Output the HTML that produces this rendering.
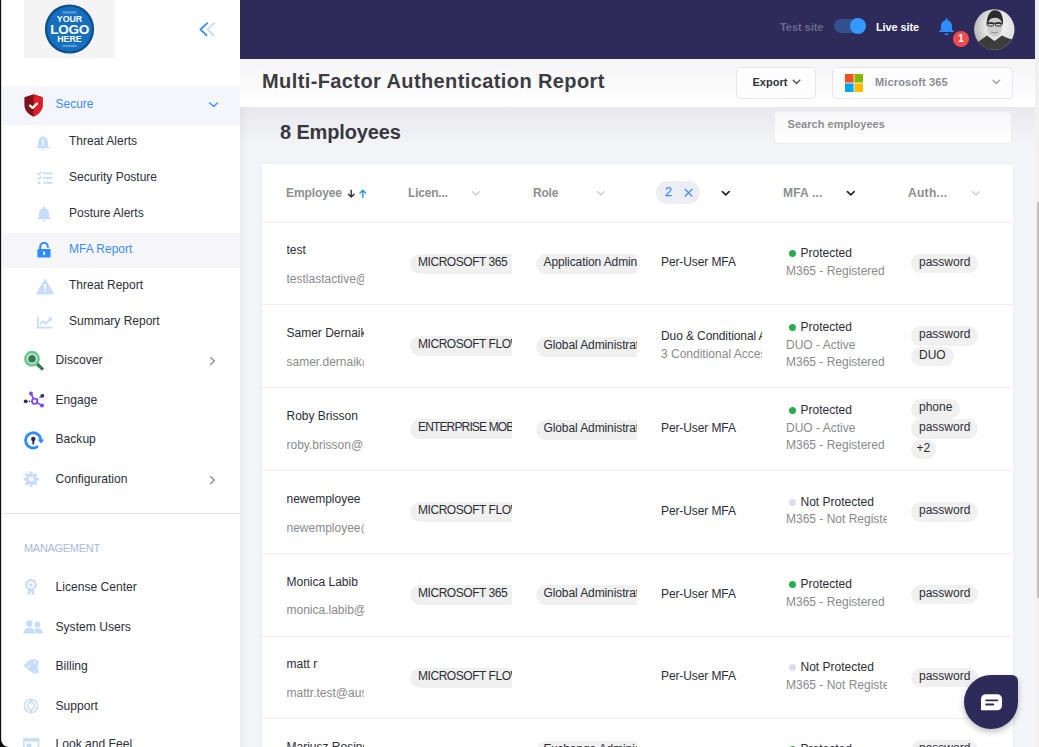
<!DOCTYPE html>
<html><head><meta charset="utf-8"><style>
html,body{margin:0;padding:0;width:1039px;height:747px;overflow:hidden;background:#fff;font-family:"Liberation Sans", sans-serif;}
*{box-sizing:content-box}
</style></head><body>
<div id="sb" style="position:absolute;left:0;top:0;width:240px;height:747px;background:#fff;overflow:hidden">
<div style="position:absolute;left:24px;top:0;width:91px;height:58px;background:#f4f4f4"></div>
<svg style="position:absolute;left:44px;top:4px" width="51" height="51" viewBox="0 0 51 51">
<circle cx="25.5" cy="25" r="24.6" fill="#0c4f8c"/>
<circle cx="25.5" cy="25" r="22.4" fill="#166fbe"/>
<rect x="18.5" y="7.3" width="14" height="2.2" fill="#5d9bd6"/>
<rect x="18.5" y="40.8" width="14" height="2.2" fill="#5d9bd6"/>
<text x="25.5" y="18.3" text-anchor="middle" font-family="Liberation Sans" font-weight="bold" font-size="8.8" fill="#fff">YOUR</text>
<text x="25.6" y="29.6" text-anchor="middle" font-family="Liberation Sans" font-weight="bold" font-size="13.6" fill="#fff" letter-spacing="-0.3">LOGO</text>
<text x="25.5" y="38" text-anchor="middle" font-family="Liberation Sans" font-weight="bold" font-size="8.8" fill="#fff">HERE</text>
</svg>
<svg style="position:absolute;left:196px;top:19px" width="24" height="21" viewBox="0 0 24 21">
<polyline points="11.3,4.2 4.4,10.5 10.7,16.3" fill="none" stroke="#2f8cff" stroke-width="1.7" stroke-linecap="round" stroke-linejoin="round"/>
<polyline points="18,4.2 11.5,10.5 17.6,16.3" fill="none" stroke="#bcdcff" stroke-width="1.7" stroke-linecap="round" stroke-linejoin="round"/>
</svg>
<div style="position:absolute;left:2px;top:86px;width:238px;height:39px;background:#f5f6fb"></div>
<svg style="position:absolute;left:24px;top:94px" width="19" height="23" viewBox="0 0 19 23">
<path d="M9.5 0.3 L18.6 3.3 L18.6 11 C18.6 16.5 14.5 20.5 9.5 22.8 C4.5 20.5 0.4 16.5 0.4 11 L0.4 3.3 Z" fill="#7e1418"/>
<path d="M9.5 0.3 L18.6 3.3 L18.6 11 C18.6 16.5 14.5 20.5 9.5 22.8 Z" fill="#de1f26"/>
<polyline points="6,11.6 8.6,13.9 13,9.6" fill="none" stroke="#fff" stroke-width="2.2" stroke-linecap="round" stroke-linejoin="round"/>
</svg>
<div style="position:absolute;left:55.5px;top:97.34px;font-size:12px;line-height:14px;color:#3b8df5;font-weight:normal;letter-spacing:0px;white-space:nowrap;">Secure</div>
<svg style="position:absolute;left:207.5px;top:101.3px" width="11" height="8" viewBox="0 0 11 8"><polyline points="1.6,2 5.8,5.3 9.4,2" fill="none" stroke="#3b8df5" stroke-width="1.3" stroke-linecap="round"/></svg>
<div style="position:absolute;left:2px;top:233px;width:238px;height:35px;background:#f6f6f9"></div>
<svg style="position:absolute;left:36px;top:135px" width="14" height="16" viewBox="0 0 14 16"><path d="M7 0.4 C7.6 0.4 8 0.8 8 1.4 V2 C10.4 2.6 11.9 4.6 11.9 7.2 V10.4 C11.9 11.3 12.7 12 13.8 12.3 V13 H0.2 V12.3 C1.3 12 2.1 11.3 2.1 10.4 V7.2 C2.1 4.6 3.6 2.6 6 2 V1.4 C6 0.8 6.4 0.4 7 0.4 Z" fill="#c6dcfb"/><rect x="6.2" y="4.5" width="1.6" height="4.2" fill="#fff"/><rect x="6.2" y="9.6" width="1.6" height="1.5" fill="#fff"/><path d="M4.8 13.8h4.4L7 15.6z" fill="#c6dcfb"/></svg>
<div style="position:absolute;left:69px;top:134.44px;font-size:12px;line-height:14px;color:#2c2e3a;font-weight:normal;letter-spacing:0px;white-space:nowrap;">Threat Alerts</div>
<svg style="position:absolute;left:37px;top:171px" width="16" height="14" viewBox="0 0 16 14"><polyline points="0.5,2.3 2,3.6 4.6,0.8" fill="none" stroke="#c6dcfb" stroke-width="1.4"/><polyline points="0.5,6.8 2,8.1 4.6,5.3" fill="none" stroke="#c6dcfb" stroke-width="1.4"/><circle cx="2.2" cy="11.8" r="1.4" fill="#c6dcfb"/><rect x="6" y="1.5" width="9.5" height="1.8" fill="#c6dcfb"/><rect x="6" y="6" width="9.5" height="1.8" fill="#c6dcfb"/><rect x="6" y="10.9" width="9.5" height="1.8" fill="#c6dcfb"/></svg>
<div style="position:absolute;left:69px;top:170.44px;font-size:12px;line-height:14px;color:#2c2e3a;font-weight:normal;letter-spacing:0px;white-space:nowrap;">Security Posture</div>
<svg style="position:absolute;left:37px;top:206px" width="14" height="16" viewBox="0 0 14 16"><path d="M7 0.4 C7.6 0.4 8 0.8 8 1.4 V2 C10.4 2.6 11.9 4.6 11.9 7.2 V10.4 C11.9 11.3 12.7 12 13.8 12.3 V13 H0.2 V12.3 C1.3 12 2.1 11.3 2.1 10.4 V7.2 C2.1 4.6 3.6 2.6 6 2 V1.4 C6 0.8 6.4 0.4 7 0.4 Z" fill="#c6dcfb"/><path d="M4.8 13.8h4.4L7 15.6z" fill="#c6dcfb"/></svg>
<div style="position:absolute;left:69px;top:206.44px;font-size:12px;line-height:14px;color:#2c2e3a;font-weight:normal;letter-spacing:0px;white-space:nowrap;">Posture Alerts</div>
<div style="position:absolute;left:69px;top:242.44px;font-size:12px;line-height:14px;color:#3b8df5;font-weight:normal;letter-spacing:0px;white-space:nowrap;">MFA Report</div>
<svg style="position:absolute;left:36px;top:278px" width="18" height="17" viewBox="0 0 18 17"><path d="M9 1.2 L17.2 15.2 Q17.5 16 16.6 16 H1.4 Q0.5 16 0.8 15.2 Z" fill="#c6dcfb" stroke="#c6dcfb" stroke-width="1" stroke-linejoin="round"/><rect x="8.2" y="6" width="1.6" height="5" fill="#fff"/><rect x="8.2" y="12.2" width="1.6" height="1.6" fill="#fff"/></svg>
<div style="position:absolute;left:69px;top:278.44px;font-size:12px;line-height:14px;color:#2c2e3a;font-weight:normal;letter-spacing:0px;white-space:nowrap;">Threat Report</div>
<svg style="position:absolute;left:37px;top:316px" width="16" height="13" viewBox="0 0 16 13"><polyline points="0.9,0.5 0.9,11.6 15.4,11.6" fill="none" stroke="#c6dcfb" stroke-width="1.7"/><polyline points="3.2,8.3 6.2,5.2 9,7.6 13.6,3" fill="none" stroke="#c6dcfb" stroke-width="1.8"/><path d="M10.6 1.4 H14.8 V5.6 Z" fill="#c6dcfb"/></svg>
<div style="position:absolute;left:69px;top:314.44px;font-size:12px;line-height:14px;color:#2c2e3a;font-weight:normal;letter-spacing:0px;white-space:nowrap;">Summary Report</div>
<svg style="position:absolute;left:37px;top:242px" width="14" height="16" viewBox="0 0 14 16"><path d="M3.2 7V4.6C3.2 2.4 4.9 0.8 7 0.8s3.8 1.6 3.8 3.8" fill="none" stroke="#2f8cff" stroke-width="2"/><rect x="0.4" y="7" width="13.2" height="8.6" rx="1.2" fill="#2f8cff"/><rect x="6.2" y="9.4" width="1.6" height="3.8" rx=".8" fill="#fff"/><rect x="9.8" y="4.2" width="2" height="1.6" fill="#2f8cff"/></svg>
<svg style="position:absolute;left:23px;top:350px" width="22" height="22" viewBox="0 0 22 22"><circle cx="9" cy="8.8" r="6.45" fill="none" stroke="#6ccb95" stroke-width="3"/><circle cx="9" cy="8.8" r="3.85" fill="#347a55"/><line x1="14.2" y1="14" x2="20" y2="19.6" stroke="#347a55" stroke-width="3.2"/></svg>
<div style="position:absolute;left:55.5px;top:352.81px;font-size:12.1px;line-height:14px;color:#2c2e3a;font-weight:normal;letter-spacing:0px;white-space:nowrap;">Discover</div>
<svg style="position:absolute;left:208px;top:355px" width="9" height="12" viewBox="0 0 9 12"><polyline points="2.6,2.7 6.3,6.1 2.6,9.5" fill="none" stroke="#8c8c8c" stroke-width="1.3" stroke-linecap="round"/></svg>
<svg style="position:absolute;left:23px;top:390px" width="22" height="20" viewBox="0 0 22 20"><line x1="2.7" y1="11.3" x2="9.5" y2="11.3" stroke="#2e2b5b" stroke-width="1.2" stroke-dasharray="1.5 1.5"/><line x1="11.6" y1="11.3" x2="8" y2="3.4" stroke="#7d48f6" stroke-width="1.6"/><line x1="11.6" y1="11.3" x2="19" y2="15.6" stroke="#7d48f6" stroke-width="1.6"/><line x1="11.6" y1="11.3" x2="19.3" y2="5.8" stroke="#2e2b5b" stroke-width="1.2" stroke-dasharray="1.5 1.5"/><circle cx="11.6" cy="11.2" r="2.6" fill="#fff" stroke="#7d48f6" stroke-width="1.8"/><circle cx="8" cy="3.4" r="2" fill="#7d48f6"/><circle cx="19" cy="15.6" r="2" fill="#7d48f6"/><circle cx="2.7" cy="11.3" r="1.9" fill="#2e2b5b"/><circle cx="19.3" cy="5.8" r="1.9" fill="#2e2b5b"/></svg>
<div style="position:absolute;left:55.5px;top:392.81px;font-size:12.1px;line-height:14px;color:#2c2e3a;font-weight:normal;letter-spacing:0px;white-space:nowrap;">Engage</div>
<svg style="position:absolute;left:23px;top:430px" width="22" height="21" viewBox="0 0 22 21"><path d="M14.13 16.84 A7.6 7.6 0 1 1 17.67 9.74" fill="none" stroke="#2f8cff" stroke-width="2.8" stroke-linecap="round"/><path d="M14.6 9.4 L21.4 9.4 L18 13.6 Z" fill="#2f8cff"/><circle cx="10.3" cy="8.9" r="2.2" fill="#2a2550"/><path d="M9.2 9.4 H11.4 L11.1 14.6 H9.5 Z" fill="#2a2550"/></svg>
<div style="position:absolute;left:55.5px;top:431.81px;font-size:12.1px;line-height:14px;color:#2c2e3a;font-weight:normal;letter-spacing:0px;white-space:nowrap;">Backup</div>
<svg style="position:absolute;left:23px;top:471px" width="17" height="17" viewBox="0 0 17 17"><g fill="#c6dcfb"><circle cx="8.2" cy="8.2" r="5.6"/><rect x="6.8" y="0.5" width="2.8" height="3.5"/><rect x="6.8" y="12.4" width="2.8" height="3.5"/><rect x="0.5" y="6.8" width="3.5" height="2.8"/><rect x="12.4" y="6.8" width="3.5" height="2.8"/><g transform="rotate(45 8.2 8.2)"><rect x="6.8" y="0.5" width="2.8" height="3.5"/><rect x="6.8" y="12.4" width="2.8" height="3.5"/><rect x="0.5" y="6.8" width="3.5" height="2.8"/><rect x="12.4" y="6.8" width="3.5" height="2.8"/></g></g><circle cx="8.2" cy="8.2" r="2.4" fill="#fff"/></svg>
<div style="position:absolute;left:55.5px;top:471.81px;font-size:12.1px;line-height:14px;color:#2c2e3a;font-weight:normal;letter-spacing:0px;white-space:nowrap;">Configuration</div>
<svg style="position:absolute;left:208px;top:474px" width="9" height="12" viewBox="0 0 9 12"><polyline points="2.6,2.7 6.3,6.1 2.6,9.5" fill="none" stroke="#8c8c8c" stroke-width="1.3" stroke-linecap="round"/></svg>
<div style="position:absolute;left:2px;top:513px;width:238px;height:1px;background:#e4e6ee"></div>
<div style="position:absolute;left:24px;top:542.49px;font-size:11px;line-height:13px;color:#a9b9df;font-weight:normal;letter-spacing:-0.3px;white-space:nowrap;">MANAGEMENT</div>
<svg style="position:absolute;left:24px;top:578px" width="14" height="18" viewBox="0 0 14 18"><g fill="#c6dcfb"><path d="M4.6 10.5 L3.2 16.8 L4.9 16 L5.9 17.3 L7.2 11.6 Z M9.4 10.5 L10.8 16.8 L9.1 16 L8.1 17.3 L6.8 11.6 Z"/><circle cx="7" cy="6.8" r="5.1"/><circle cx="12.20" cy="6.80" r="1.05"/><circle cx="11.50" cy="9.40" r="1.05"/><circle cx="9.60" cy="11.30" r="1.05"/><circle cx="7.00" cy="12.00" r="1.05"/><circle cx="4.40" cy="11.30" r="1.05"/><circle cx="2.50" cy="9.40" r="1.05"/><circle cx="1.80" cy="6.80" r="1.05"/><circle cx="2.50" cy="4.20" r="1.05"/><circle cx="4.40" cy="2.30" r="1.05"/><circle cx="7.00" cy="1.60" r="1.05"/><circle cx="9.60" cy="2.30" r="1.05"/><circle cx="11.50" cy="4.20" r="1.05"/></g><circle cx="7" cy="6.8" r="3.9" fill="#fff"/><circle cx="7" cy="6.8" r="3.9" fill="none" stroke="#c6dcfb" stroke-width="0.6"/><polygon points="7.00,4.30 7.68,6.07 9.57,6.17 8.09,7.36 8.59,9.18 7.00,8.15 5.41,9.18 5.91,7.36 4.43,6.17 6.32,6.07" fill="#c6dcfb"/></svg>
<div style="position:absolute;left:55.5px;top:579.81px;font-size:12.1px;line-height:14px;color:#2c2e3a;font-weight:normal;letter-spacing:0px;white-space:nowrap;">License Center</div>
<svg style="position:absolute;left:23px;top:620px" width="21" height="15" viewBox="0 0 21 15"><circle cx="6.2" cy="3.6" r="3.3" fill="#c6dcfb"/><path d="M0.5 13.6 C0.5 9.8 2.6 7.8 6.2 7.8 C9.8 7.8 12 9.8 12 13.6 Z" fill="#c6dcfb"/><circle cx="14.4" cy="4.4" r="2.9" fill="#c6dcfb"/><path d="M12.6 13.6 C12.6 11 12.2 9.6 11.5 8.8 C12.3 8.4 13.2 8.2 14.4 8.2 C17.8 8.2 19.7 10 19.7 13.6 Z" fill="#c6dcfb"/></svg>
<div style="position:absolute;left:55.5px;top:619.81px;font-size:12.1px;line-height:14px;color:#2c2e3a;font-weight:normal;letter-spacing:0px;white-space:nowrap;">System Users</div>
<svg style="position:absolute;left:23px;top:659px" width="17" height="15" viewBox="0 0 17 15"><path d="M0.4 6.8 L6.6 0.6 H13.5 L15.6 2.7 L14.6 9.4 L9.8 14.2 Z" fill="#c6dcfb"/><circle cx="11.6" cy="3.5" r="1" fill="#fff"/><rect x="4" y="7" width="3.6" height="1" transform="rotate(-40 5.8 7.5)" fill="#fff"/><path d="M9.8 14.2 L15.6 8.4 L15.6 14.2 Z" fill="#c6dcfb"/></svg>
<div style="position:absolute;left:55.5px;top:658.81px;font-size:12.1px;line-height:14px;color:#2c2e3a;font-weight:normal;letter-spacing:0px;white-space:nowrap;">Billing</div>
<svg style="position:absolute;left:23px;top:698px" width="17" height="17" viewBox="0 0 17 17"><circle cx="8" cy="8" r="6.6" fill="none" stroke="#c6dcfb" stroke-width="1.5"/><circle cx="8" cy="8" r="3.4" fill="none" stroke="#c6dcfb" stroke-width="1.5"/><rect x="7" y="0.8" width="2" height="3.2" fill="#c6dcfb"/><rect x="7" y="12" width="2" height="3.2" fill="#c6dcfb"/></svg>
<div style="position:absolute;left:55.5px;top:698.81px;font-size:12.1px;line-height:14px;color:#2c2e3a;font-weight:normal;letter-spacing:0px;white-space:nowrap;">Support</div>
<svg style="position:absolute;left:23px;top:738px" width="17" height="10" viewBox="0 0 17 10"><rect x="0.9" y="0.9" width="14.6" height="12" fill="none" stroke="#c6dcfb" stroke-width="1.6"/><rect x="0.9" y="0.9" width="14.6" height="2.6" fill="#c6dcfb"/><rect x="3.5" y="5.6" width="5" height="4.4" fill="#c6dcfb"/></svg>
<div style="position:absolute;left:55.5px;top:737.41px;font-size:12.1px;line-height:14px;color:#2c2e3a;font-weight:normal;letter-spacing:0px;white-space:nowrap;">Look and Feel</div>
</div>
<svg style="position:absolute;left:0;top:0" width="12" height="747" viewBox="0 0 12 747"><path d="M0 0 H1.15 V739.2 A7.6 7.6 0 0 0 8.75 747 H0 Z" fill="#0c0c0c"/></svg>
<div style="position:absolute;left:240px;top:59px;width:795px;height:688px;background:#f4f5f8"></div>
<div style="position:absolute;left:240px;top:107px;width:795px;height:40px;background:linear-gradient(#e8e8ed,#f4f5f8)"></div>
<div style="position:absolute;left:240px;top:59px;width:10px;height:688px;background:linear-gradient(to right,rgba(0,0,20,0.035),rgba(0,0,20,0))"></div>
<div style="position:absolute;left:240px;top:0;width:795px;height:59px;background:#2e2a5a"></div>
<div style="position:absolute;left:780px;top:20.69px;font-size:11px;line-height:13px;color:#6b6888;font-weight:bold;letter-spacing:-0.05px;white-space:nowrap;">Test site</div>
<div style="position:absolute;left:834px;top:19px;width:32px;height:14px;border-radius:7px;background:#31508c"></div>
<div style="position:absolute;left:850px;top:18px;width:16px;height:16px;border-radius:50%;background:#3399ff"></div>
<div style="position:absolute;left:876px;top:20.69px;font-size:11px;line-height:13px;color:#ffffff;font-weight:bold;letter-spacing:-0.1px;white-space:nowrap;">Live site</div>
<svg style="position:absolute;left:938px;top:18px" width="17" height="18" viewBox="0 0 17 18"><path d="M8.5 0.6c.7 0 1.1.5 1.1 1.1v.6c2.7.6 4.4 2.8 4.4 5.6v3.6l2.3 2.6H0.7l2.3-2.6V7.9c0-2.8 1.7-5 4.4-5.6v-.6c0-.6.4-1.1 1.1-1.1z" fill="#2f8cff"/><rect x="6.5" y="15.6" width="4" height="1.4" rx=".7" fill="#2f8cff"/></svg>
<div style="position:absolute;left:953px;top:31px;width:16px;height:16px;border-radius:50%;background:#ef4a50;color:#fff;font-size:10px;font-weight:bold;line-height:16px;text-align:center">1</div>
<svg style="position:absolute;left:974px;top:9px" width="41" height="41" viewBox="0 0 41 41">
<defs><radialGradient id="ag" cx="0.62" cy="0.42" r="0.62"><stop offset="0" stop-color="#f4f4f4"/><stop offset="0.6" stop-color="#e2e2e2"/><stop offset="1" stop-color="#b8b8b8"/></radialGradient><clipPath id="ac"><circle cx="20.3" cy="20.5" r="20.2"/></clipPath></defs>
<g clip-path="url(#ac)"><rect width="41" height="41" fill="url(#ag)"/>
<ellipse cx="20.6" cy="17.5" rx="7.6" ry="10.5" fill="#cdcdcd"/>
<path d="M13 26 L20.5 31 L28 26 L29 33 H12 Z" fill="#e6e6e6"/>
<path d="M0 41 V36 C3 33.5 8 30.5 13 26.5 L20.5 32 L28 26.5 C32 28.5 36 30 41 31 V41 Z" fill="#3c3c3c"/>
<path d="M12.8 18 C12 9 15 1.2 21 1.2 C27 1.2 29.8 7 29 17 C28.2 12 25.5 8.8 21 8.8 C16.2 8.8 13.8 12 12.8 18 Z" fill="#2c2c2c"/>
<path d="M12.8 14.3 H28.6" stroke="#333" stroke-width="1.2"/><rect x="14" y="13.6" width="5.6" height="3.4" rx="1" fill="none" stroke="#333" stroke-width="1"/><rect x="21.6" y="13.6" width="5.6" height="3.4" rx="1" fill="none" stroke="#333" stroke-width="1"/>
<path d="M17 23 Q20.5 25.2 24 23" fill="none" stroke="#888" stroke-width="1"/>
</g></svg>
<div style="position:absolute;left:240px;top:59px;width:795px;height:48px;background:linear-gradient(#f5f5f7,#ffffff)"></div>
<div style="position:absolute;left:262px;top:69.57px;font-size:20px;line-height:23px;color:#3c3c43;font-weight:bold;letter-spacing:0.4px;white-space:nowrap;">Multi-Factor Authentication Report</div>
<div style="position:absolute;left:736px;top:67px;width:78px;height:30px;border:1px solid #e6e6ee;border-radius:4px;background:#fdfdfe"></div>
<div style="position:absolute;left:752.5px;top:76.49px;font-size:11px;line-height:13px;color:#33333d;font-weight:bold;letter-spacing:0px;white-space:nowrap;">Export</div>
<svg style="position:absolute;left:791px;top:78px" width="11" height="8" viewBox="0 0 11 8"><polyline points="2.2,2.3 5.5,5.6 8.8,2.3" fill="none" stroke="#55555c" stroke-width="1.4" stroke-linecap="round"/></svg>
<div style="position:absolute;left:832px;top:67px;width:179px;height:30px;border:1px solid #e6e6ee;border-radius:4px;background:#fdfdfe"></div>
<svg style="position:absolute;left:845px;top:74px" width="18" height="18" viewBox="0 0 18 18"><rect x="0" y="0" width="8.6" height="8.6" fill="#f25022"/><rect x="9.4" y="0" width="8.6" height="8.6" fill="#7fba00"/><rect x="0" y="9.4" width="8.6" height="8.6" fill="#00a4ef"/><rect x="9.4" y="9.4" width="8.6" height="8.6" fill="#ffb900"/></svg>
<div style="position:absolute;left:875px;top:76.49px;font-size:11px;line-height:13px;color:#8b8b93;font-weight:bold;letter-spacing:0.15px;white-space:nowrap;">Microsoft 365</div>
<svg style="position:absolute;left:991px;top:78px" width="11" height="8" viewBox="0 0 11 8"><polyline points="2,2.2 5.3,5.4 8.6,2.2" fill="none" stroke="#a0a0a8" stroke-width="1.4" stroke-linecap="round"/></svg>
<div style="position:absolute;left:774px;top:111px;width:236px;height:31px;border:1px solid #ececf2;border-radius:4px;background:linear-gradient(#f7f7fa,#ffffff)"></div>
<div style="position:absolute;left:787.5px;top:118.49px;font-size:11px;line-height:13px;color:#8d8d92;font-weight:bold;letter-spacing:0.05px;white-space:nowrap;">Search employees</div>
<div style="position:absolute;left:280px;top:121.07px;font-size:20px;line-height:23px;color:#38383e;font-weight:bold;letter-spacing:-0.15px;white-space:nowrap;">8 Employees</div>
<div style="position:absolute;left:262px;top:164px;width:751px;height:600px;background:#fff;box-shadow:0 0 4px rgba(20,20,60,0.06)"></div>
<div style="position:absolute;left:262px;top:222px;width:751px;height:1px;background:#ececf4"></div>
<div style="position:absolute;left:286px;top:186.34px;font-size:12px;line-height:14px;color:#8e8e8e;font-weight:bold;letter-spacing:-0.1px;white-space:nowrap;">Employee</div>
<svg style="position:absolute;left:346px;top:187px" width="22" height="12" viewBox="0 0 22 12"><path d="M5.2 3.2 V10 M2.4 7.3 L5.2 10 L8 7.3" fill="none" stroke="#333" stroke-width="1.4" stroke-linecap="round"/><path d="M16.8 10.5 V3.3 M14 6.1 L16.8 3.3 L19.6 6.1" fill="none" stroke="#2f8cff" stroke-width="1.4" stroke-linecap="round"/></svg>
<div style="position:absolute;left:408px;top:185.84px;font-size:12px;line-height:14px;color:#8e8e8e;font-weight:bold;letter-spacing:-0.2px;white-space:nowrap;">Licen...</div>
<svg style="position:absolute;left:470.5px;top:190px" width="10" height="7" viewBox="0 0 10 7"><polyline points="1.4,1.6 4.8,4.9 8.2,1.6" fill="none" stroke="#c4c4c8" stroke-width="1.2" stroke-linecap="round"/></svg>
<div style="position:absolute;left:533px;top:185.84px;font-size:12px;line-height:14px;color:#8e8e8e;font-weight:bold;letter-spacing:-0.2px;white-space:nowrap;">Role</div>
<svg style="position:absolute;left:596px;top:190px" width="10" height="7" viewBox="0 0 10 7"><polyline points="1.4,1.6 4.8,4.9 8.2,1.6" fill="none" stroke="#c4c4c8" stroke-width="1.2" stroke-linecap="round"/></svg>
<div style="position:absolute;left:656px;top:181px;width:44px;height:23px;border-radius:12px;background:#edeef5"></div>
<div style="position:absolute;left:665px;top:184.87px;font-size:12.5px;line-height:14px;color:#3b8df0;font-weight:normal;letter-spacing:0px;white-space:nowrap;-webkit-text-stroke:0.25px #3b8df0;">2</div>
<svg style="position:absolute;left:683px;top:187px" width="11" height="11" viewBox="0 0 11 11"><path d="M2.3 2.4 L9 9.1 M9 2.4 L2.3 9.1" stroke="#3b8df0" stroke-width="1.3" stroke-linecap="square"/></svg>
<svg style="position:absolute;left:721px;top:190px" width="10" height="7" viewBox="0 0 10 7"><polyline points="1.4,1.6 4.8,4.9 8.2,1.6" fill="none" stroke="#222" stroke-width="1.6" stroke-linecap="round"/></svg>
<div style="position:absolute;left:783px;top:185.84px;font-size:12px;line-height:14px;color:#8e8e8e;font-weight:bold;letter-spacing:0.2px;white-space:nowrap;">MFA ...</div>
<svg style="position:absolute;left:846px;top:190px" width="10" height="7" viewBox="0 0 10 7"><polyline points="1.4,1.6 4.8,4.9 8.2,1.6" fill="none" stroke="#222" stroke-width="1.6" stroke-linecap="round"/></svg>
<div style="position:absolute;left:908px;top:185.84px;font-size:12px;line-height:14px;color:#8e8e8e;font-weight:bold;letter-spacing:0.3px;white-space:nowrap;">Auth...</div>
<svg style="position:absolute;left:971px;top:190px" width="10" height="7" viewBox="0 0 10 7"><polyline points="1.4,1.6 4.8,4.9 8.2,1.6" fill="none" stroke="#c4c4c8" stroke-width="1.2" stroke-linecap="round"/></svg>
<div style="position:absolute;left:262px;top:304.40px;width:751px;height:1px;background:#ececf4"></div>
<div style="position:absolute;left:286.5px;top:243.34px;font-size:12px;line-height:14px;color:#2c2e36;font-weight:normal;letter-spacing:0px;width:77px;overflow:hidden;white-space:nowrap;">test</div>
<div style="position:absolute;left:286.5px;top:272.14px;font-size:12px;line-height:14px;color:#8a8a8e;font-weight:normal;letter-spacing:0px;width:77px;overflow:hidden;white-space:nowrap;">testlastactive@aus.com</div>
<div style="position:absolute;left:410px;top:253.50px;width:102px;height:20px;overflow:hidden"><div style="border-radius:10px 0 0 10px;background:#f0f0f0;height:20px;padding-left:8px;font-size:12px;line-height:17px;color:#2c2e36;white-space:nowrap;letter-spacing:-0.45px">MICROSOFT 365<span style="margin-left:6px">E5</span></div></div>
<div style="position:absolute;left:535.5px;top:254.00px;width:101.5px;height:20px;overflow:hidden;display:flex"><div style="border-radius:10px 0 0 10px;background:#f0f0f0;height:20px;padding:0 8px;font-size:12px;line-height:17px;color:#2c2e36;white-space:nowrap;letter-spacing:-0.1px;min-width:86px">Application Administrator</div></div>
<div style="position:absolute;left:661px;top:255.34px;font-size:12px;line-height:14px;color:#2c2e36;font-weight:normal;letter-spacing:-0.1px;width:101px;overflow:hidden;white-space:nowrap;">Per-User MFA</div>
<div style="position:absolute;left:788.5px;top:250.20px;width:7px;height:7px;border-radius:50%;background:#28ad4e"></div>
<div style="position:absolute;left:800.5px;top:246.24px;font-size:12px;line-height:14px;color:#2c2e36;font-weight:normal;letter-spacing:0px;white-space:nowrap;">Protected</div>
<div style="position:absolute;left:786px;top:263.84px;font-size:12px;line-height:14px;color:#8a8a8e;font-weight:normal;letter-spacing:0px;width:101px;overflow:hidden;white-space:nowrap;">M365 - Registered</div>
<div style="position:absolute;left:911px;top:253.75px;height:19.5px;border-radius:10px;background:#f0f0f0;padding:0 8px;font-size:12px;line-height:16.5px;color:#2c2e36;white-space:nowrap">password</div>
<div style="position:absolute;left:262px;top:387.20px;width:751px;height:1px;background:#ececf4"></div>
<div style="position:absolute;left:286.5px;top:326.14px;font-size:12px;line-height:14px;color:#2c2e36;font-weight:normal;letter-spacing:0px;width:77px;overflow:hidden;white-space:nowrap;">Samer Dernaik</div>
<div style="position:absolute;left:286.5px;top:354.94px;font-size:12px;line-height:14px;color:#8a8a8e;font-weight:normal;letter-spacing:0px;width:77px;overflow:hidden;white-space:nowrap;">samer.dernaik@aus.com</div>
<div style="position:absolute;left:410px;top:336.30px;width:102px;height:20px;overflow:hidden"><div style="border-radius:10px 0 0 10px;background:#f0f0f0;height:20px;padding-left:8px;font-size:12px;line-height:17px;color:#2c2e36;white-space:nowrap;letter-spacing:-0.45px">MICROSOFT FLOW FREE</div></div>
<div style="position:absolute;left:535.5px;top:336.80px;width:101.5px;height:20px;overflow:hidden;display:flex"><div style="border-radius:10px 0 0 10px;background:#f0f0f0;height:20px;padding:0 8px;font-size:12px;line-height:17px;color:#2c2e36;white-space:nowrap;letter-spacing:-0.1px;min-width:86px">Global Administrator</div></div>
<div style="position:absolute;left:661px;top:328.64px;font-size:12px;line-height:14px;color:#2c2e36;font-weight:normal;letter-spacing:-0.1px;width:101px;overflow:hidden;white-space:nowrap;">Duo &amp; Conditional Access</div>
<div style="position:absolute;left:661px;top:347.14px;font-size:12px;line-height:14px;color:#8a8a8e;font-weight:normal;letter-spacing:0px;width:101px;overflow:hidden;white-space:nowrap;">3 Conditional Access</div>
<div style="position:absolute;left:788.5px;top:324.20px;width:7px;height:7px;border-radius:50%;background:#28ad4e"></div>
<div style="position:absolute;left:800.5px;top:320.24px;font-size:12px;line-height:14px;color:#2c2e36;font-weight:normal;letter-spacing:0px;white-space:nowrap;">Protected</div>
<div style="position:absolute;left:786px;top:337.84px;font-size:12px;line-height:14px;color:#8a8a8e;font-weight:normal;letter-spacing:0px;width:101px;overflow:hidden;white-space:nowrap;">DUO - Active</div>
<div style="position:absolute;left:786px;top:355.44px;font-size:12px;line-height:14px;color:#8a8a8e;font-weight:normal;letter-spacing:0px;width:101px;overflow:hidden;white-space:nowrap;">M365 - Registered</div>
<div style="position:absolute;left:911px;top:326.40px;height:19.5px;border-radius:10px;background:#f0f0f0;padding:0 8px;font-size:12px;line-height:16.5px;color:#2c2e36;white-space:nowrap">password</div>
<div style="position:absolute;left:911px;top:346.70px;height:19.5px;border-radius:10px;background:#f0f0f0;padding:0 8px;font-size:12px;line-height:16.5px;color:#2c2e36;white-space:nowrap">DUO</div>
<div style="position:absolute;left:262px;top:470.00px;width:751px;height:1px;background:#ececf4"></div>
<div style="position:absolute;left:286.5px;top:408.94px;font-size:12px;line-height:14px;color:#2c2e36;font-weight:normal;letter-spacing:0px;width:77px;overflow:hidden;white-space:nowrap;">Roby Brisson</div>
<div style="position:absolute;left:286.5px;top:437.74px;font-size:12px;line-height:14px;color:#8a8a8e;font-weight:normal;letter-spacing:0px;width:77px;overflow:hidden;white-space:nowrap;">roby.brisson@aus.com</div>
<div style="position:absolute;left:410px;top:419.10px;width:102px;height:20px;overflow:hidden"><div style="border-radius:10px 0 0 10px;background:#f0f0f0;height:20px;padding-left:8px;font-size:12px;line-height:17px;color:#2c2e36;white-space:nowrap;letter-spacing:-0.45px"><span style="letter-spacing:-0.85px">ENTERPRISE MOBILITY</span></div></div>
<div style="position:absolute;left:535.5px;top:419.60px;width:101.5px;height:20px;overflow:hidden;display:flex"><div style="border-radius:10px 0 0 10px;background:#f0f0f0;height:20px;padding:0 8px;font-size:12px;line-height:17px;color:#2c2e36;white-space:nowrap;letter-spacing:-0.1px;min-width:86px">Global Administrator</div></div>
<div style="position:absolute;left:661px;top:420.94px;font-size:12px;line-height:14px;color:#2c2e36;font-weight:normal;letter-spacing:-0.1px;width:101px;overflow:hidden;white-space:nowrap;">Per-User MFA</div>
<div style="position:absolute;left:788.5px;top:407.00px;width:7px;height:7px;border-radius:50%;background:#28ad4e"></div>
<div style="position:absolute;left:800.5px;top:403.04px;font-size:12px;line-height:14px;color:#2c2e36;font-weight:normal;letter-spacing:0px;white-space:nowrap;">Protected</div>
<div style="position:absolute;left:786px;top:420.64px;font-size:12px;line-height:14px;color:#8a8a8e;font-weight:normal;letter-spacing:0px;width:101px;overflow:hidden;white-space:nowrap;">DUO - Active</div>
<div style="position:absolute;left:786px;top:438.24px;font-size:12px;line-height:14px;color:#8a8a8e;font-weight:normal;letter-spacing:0px;width:101px;overflow:hidden;white-space:nowrap;">M365 - Registered</div>
<div style="position:absolute;left:911px;top:399.05px;height:19.5px;border-radius:10px;background:#f0f0f0;padding:0 8px;font-size:12px;line-height:16.5px;color:#2c2e36;white-space:nowrap">phone</div>
<div style="position:absolute;left:911px;top:419.35px;height:19.5px;border-radius:10px;background:#f0f0f0;padding:0 8px;font-size:12px;line-height:16.5px;color:#2c2e36;white-space:nowrap">password</div>
<div style="position:absolute;left:911px;top:439.65px;height:19.5px;border-radius:10px;background:#f0f0f0;padding:0 5.5px;font-size:12px;line-height:16.5px;color:#2c2e36;white-space:nowrap">+2</div>
<div style="position:absolute;left:262px;top:552.80px;width:751px;height:1px;background:#ececf4"></div>
<div style="position:absolute;left:286.5px;top:491.74px;font-size:12px;line-height:14px;color:#2c2e36;font-weight:normal;letter-spacing:0px;width:77px;overflow:hidden;white-space:nowrap;">newemployee</div>
<div style="position:absolute;left:286.5px;top:520.54px;font-size:12px;line-height:14px;color:#8a8a8e;font-weight:normal;letter-spacing:0px;width:77px;overflow:hidden;white-space:nowrap;">newemployee@aus.com</div>
<div style="position:absolute;left:410px;top:501.90px;width:102px;height:20px;overflow:hidden"><div style="border-radius:10px 0 0 10px;background:#f0f0f0;height:20px;padding-left:8px;font-size:12px;line-height:17px;color:#2c2e36;white-space:nowrap;letter-spacing:-0.45px">MICROSOFT FLOW FREE</div></div>
<div style="position:absolute;left:661px;top:503.74px;font-size:12px;line-height:14px;color:#2c2e36;font-weight:normal;letter-spacing:-0.1px;width:101px;overflow:hidden;white-space:nowrap;">Per-User MFA</div>
<div style="position:absolute;left:788.5px;top:498.60px;width:7px;height:7px;border-radius:50%;background:#dcdcef"></div>
<div style="position:absolute;left:800.5px;top:494.64px;font-size:12px;line-height:14px;color:#2c2e36;font-weight:normal;letter-spacing:0px;white-space:nowrap;">Not Protected</div>
<div style="position:absolute;left:786px;top:512.24px;font-size:12px;line-height:14px;color:#8a8a8e;font-weight:normal;letter-spacing:0px;width:101px;overflow:hidden;white-space:nowrap;">M365 - Not Registered</div>
<div style="position:absolute;left:911px;top:502.15px;height:19.5px;border-radius:10px;background:#f0f0f0;padding:0 8px;font-size:12px;line-height:16.5px;color:#2c2e36;white-space:nowrap">password</div>
<div style="position:absolute;left:262px;top:635.60px;width:751px;height:1px;background:#ececf4"></div>
<div style="position:absolute;left:286.5px;top:574.54px;font-size:12px;line-height:14px;color:#2c2e36;font-weight:normal;letter-spacing:0px;width:77px;overflow:hidden;white-space:nowrap;">Monica Labib</div>
<div style="position:absolute;left:286.5px;top:603.34px;font-size:12px;line-height:14px;color:#8a8a8e;font-weight:normal;letter-spacing:0px;width:77px;overflow:hidden;white-space:nowrap;">monica.labib@aus.com</div>
<div style="position:absolute;left:410px;top:584.70px;width:102px;height:20px;overflow:hidden"><div style="border-radius:10px 0 0 10px;background:#f0f0f0;height:20px;padding-left:8px;font-size:12px;line-height:17px;color:#2c2e36;white-space:nowrap;letter-spacing:-0.45px">MICROSOFT 365<span style="margin-left:6px">E5</span></div></div>
<div style="position:absolute;left:535.5px;top:585.20px;width:101.5px;height:20px;overflow:hidden;display:flex"><div style="border-radius:10px 0 0 10px;background:#f0f0f0;height:20px;padding:0 8px;font-size:12px;line-height:17px;color:#2c2e36;white-space:nowrap;letter-spacing:-0.1px;min-width:86px">Global Administrator</div></div>
<div style="position:absolute;left:661px;top:586.54px;font-size:12px;line-height:14px;color:#2c2e36;font-weight:normal;letter-spacing:-0.1px;width:101px;overflow:hidden;white-space:nowrap;">Per-User MFA</div>
<div style="position:absolute;left:788.5px;top:581.40px;width:7px;height:7px;border-radius:50%;background:#28ad4e"></div>
<div style="position:absolute;left:800.5px;top:577.44px;font-size:12px;line-height:14px;color:#2c2e36;font-weight:normal;letter-spacing:0px;white-space:nowrap;">Protected</div>
<div style="position:absolute;left:786px;top:595.04px;font-size:12px;line-height:14px;color:#8a8a8e;font-weight:normal;letter-spacing:0px;width:101px;overflow:hidden;white-space:nowrap;">M365 - Registered</div>
<div style="position:absolute;left:911px;top:584.95px;height:19.5px;border-radius:10px;background:#f0f0f0;padding:0 8px;font-size:12px;line-height:16.5px;color:#2c2e36;white-space:nowrap">password</div>
<div style="position:absolute;left:262px;top:718.40px;width:751px;height:1px;background:#ececf4"></div>
<div style="position:absolute;left:286.5px;top:657.34px;font-size:12px;line-height:14px;color:#2c2e36;font-weight:normal;letter-spacing:0px;width:77px;overflow:hidden;white-space:nowrap;">matt r</div>
<div style="position:absolute;left:286.5px;top:686.14px;font-size:12px;line-height:14px;color:#8a8a8e;font-weight:normal;letter-spacing:0px;width:77px;overflow:hidden;white-space:nowrap;">mattr.test@aus.com</div>
<div style="position:absolute;left:410px;top:667.50px;width:102px;height:20px;overflow:hidden"><div style="border-radius:10px 0 0 10px;background:#f0f0f0;height:20px;padding-left:8px;font-size:12px;line-height:17px;color:#2c2e36;white-space:nowrap;letter-spacing:-0.45px">MICROSOFT FLOW FREE</div></div>
<div style="position:absolute;left:661px;top:669.34px;font-size:12px;line-height:14px;color:#2c2e36;font-weight:normal;letter-spacing:-0.1px;width:101px;overflow:hidden;white-space:nowrap;">Per-User MFA</div>
<div style="position:absolute;left:788.5px;top:664.20px;width:7px;height:7px;border-radius:50%;background:#dcdcef"></div>
<div style="position:absolute;left:800.5px;top:660.24px;font-size:12px;line-height:14px;color:#2c2e36;font-weight:normal;letter-spacing:0px;white-space:nowrap;">Not Protected</div>
<div style="position:absolute;left:786px;top:677.84px;font-size:12px;line-height:14px;color:#8a8a8e;font-weight:normal;letter-spacing:0px;width:101px;overflow:hidden;white-space:nowrap;">M365 - Not Registered</div>
<div style="position:absolute;left:911px;top:667.75px;height:19.5px;border-radius:10px;background:#f0f0f0;padding:0 8px;font-size:12px;line-height:16.5px;color:#2c2e36;white-space:nowrap">password</div>
<div style="position:absolute;left:286.5px;top:740.14px;font-size:12px;line-height:14px;color:#2c2e36;font-weight:normal;letter-spacing:0px;width:77px;overflow:hidden;white-space:nowrap;">Mariusz Rosinski</div>
<div style="position:absolute;left:286.5px;top:768.94px;font-size:12px;line-height:14px;color:#8a8a8e;font-weight:normal;letter-spacing:0px;width:77px;overflow:hidden;white-space:nowrap;">mariusz@aus.com</div>
<div style="position:absolute;left:535.5px;top:740.80px;width:101.5px;height:20px;overflow:hidden;display:flex"><div style="border-radius:10px 0 0 10px;background:#f0f0f0;height:20px;padding:0 8px;font-size:12px;line-height:17px;color:#2c2e36;white-space:nowrap;letter-spacing:-0.1px;min-width:86px">Exchange Administrator</div></div>
<div style="position:absolute;left:535.5px;top:760.80px;width:101.5px;height:20px;overflow:hidden;display:flex"><div style="border-radius:10px 0 0 10px;background:#f0f0f0;height:20px;padding:0 8px;font-size:12px;line-height:17px;color:#2c2e36;white-space:nowrap;letter-spacing:-0.1px;min-width:86px">Global Reader</div></div>
<div style="position:absolute;left:661px;top:752.14px;font-size:12px;line-height:14px;color:#2c2e36;font-weight:normal;letter-spacing:-0.1px;width:101px;overflow:hidden;white-space:nowrap;">Per-User MFA</div>
<div style="position:absolute;left:788.5px;top:746.00px;width:7px;height:7px;border-radius:50%;background:#28ad4e"></div>
<div style="position:absolute;left:800.5px;top:742.04px;font-size:12px;line-height:14px;color:#2c2e36;font-weight:normal;letter-spacing:0px;white-space:nowrap;">Protected</div>
<div style="position:absolute;left:786px;top:759.64px;font-size:12px;line-height:14px;color:#8a8a8e;font-weight:normal;letter-spacing:0px;width:101px;overflow:hidden;white-space:nowrap;">M365 - Registered</div>
<div style="position:absolute;left:911px;top:740.40px;height:19.5px;border-radius:10px;background:#f0f0f0;padding:0 8px;font-size:12px;line-height:16.5px;color:#2c2e36;white-space:nowrap">password</div>
<div style="position:absolute;left:911px;top:760.70px;height:19.5px;border-radius:10px;background:#f0f0f0;padding:0 8px;font-size:12px;line-height:16.5px;color:#2c2e36;white-space:nowrap">phone</div>
<div style="position:absolute;left:964px;top:675px;width:54px;height:54px;border-radius:27px 6px 27px 27px;background:#2e2a5a;box-shadow:0 3px 6px rgba(0,0,0,0.25)"></div>
<svg style="position:absolute;left:980px;top:693px" width="23" height="19" viewBox="0 0 23 19"><path d="M1 17.3 V6 C1 3 3 1.3 6 1.3 H17 C20 1.3 22 3 22 6 V12.4 C22 15.4 20 17.3 17 17.3 Z" fill="#fff"/><rect x="5.2" y="6.4" width="13" height="1.8" rx=".9" fill="#2e2a5a"/><rect x="5.2" y="10.6" width="9" height="1.8" rx=".9" fill="#2e2a5a"/></svg>
<div style="position:absolute;left:1035px;top:0;width:4px;height:747px;background:#f1f1f1"></div>
<div style="position:absolute;left:1037px;top:202px;width:2px;height:396px;background:#c0c0c0"></div>
</body></html>
